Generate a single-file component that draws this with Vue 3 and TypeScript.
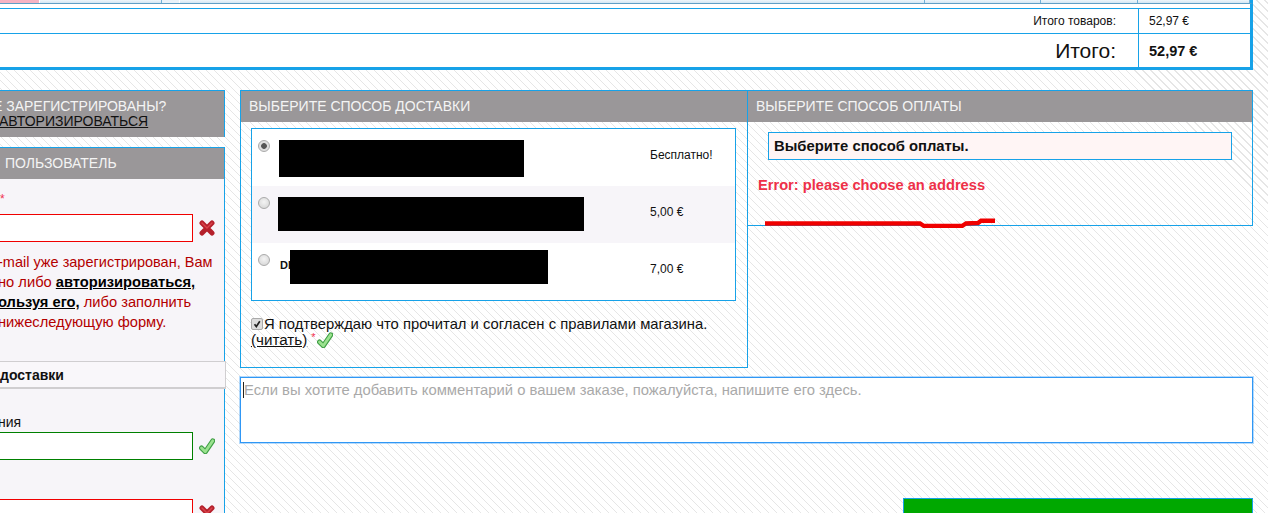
<script setup lang="ts">
const strip = [
  { w: 40, cls: 'pink' },
  { w: 122, cls: '' },
  { w: 18, cls: 'pale' },
  { w: 745, cls: '' },
  { w: 116, cls: '' },
  { w: 97, cls: '' },
  { w: 112, cls: '' },
]

const deliveries = [
  { name: '', price: 'Бесплатно!', checked: true, cls: 'r1' },
  { name: '', price: '5,00 €', checked: false, cls: 'r2' },
  { name: 'DHL', price: '7,00 €', checked: false, cls: 'r3' },
]
</script>

<template>
  <div class="page">
    <div class="strip">
      <span
        v-for="(s, i) in strip"
        :key="i"
        class="strip-cell"
        :class="s.cls"
        :style="{ width: s.w + 'px' }"
      ></span>
    </div>

    <div class="totals">
      <div class="row small">
        <div class="label">Итого товаров:</div>
        <div class="value">52,97 €</div>
      </div>
      <div class="row big">
        <div class="label">Итого:</div>
        <div class="value">52,97 €</div>
      </div>
    </div>

    <div class="main">
      <aside class="left">
        <div class="box login">
          <div class="line-a">Е ЗАРЕГИСТРИРОВАНЫ?</div>
          <a class="line-b">АВТОРИЗИРОВАТЬСЯ</a>
        </div>

        <div class="box user">
          <div class="title">ПОЛЬЗОВАТЕЛЬ</div>
          <div class="body">
            <div class="star">*</div>
            <div class="field">
              <input class="bad" type="text" />
              <svg class="mark" viewBox="0 0 16 16">
                <path d="M3 3 L13 13 M13 3 L3 13" stroke="#b5202b" stroke-width="5" stroke-linecap="round" />
                <path d="M3 3 L8 8 L13 3" fill="none" stroke="#d8434b" stroke-width="1.5" stroke-linecap="round" />
              </svg>
            </div>
            <div class="err">
              <div class="first">-mail уже зарегистрирован, Вам</div>
              <div>но либо <a>авторизироваться,</a></div>
              <div><a>ользуя его,</a> либо заполнить</div>
              <div>нижеследующую форму.</div>
            </div>
            <div class="tab">доставки</div>
            <div class="caption">ния</div>
            <div class="field">
              <input class="good" type="text" />
              <svg class="mark" viewBox="0 0 16 16">
                <path d="M2.5 10 L6.3 13.8 L13.8 2.8" fill="none" stroke="#3f9e45" stroke-width="5" stroke-linecap="round" stroke-linejoin="round" />
                <path d="M2.5 10 L6.3 13.8 L13.8 2.8" fill="none" stroke="#9be28f" stroke-width="2.8" stroke-linecap="round" stroke-linejoin="round" />
              </svg>
            </div>
            <div class="field next">
              <input class="bad" type="text" />
              <svg class="mark" viewBox="0 0 16 16">
                <path d="M3 3 L13 13 M13 3 L3 13" stroke="#b5202b" stroke-width="5" stroke-linecap="round" />
                <path d="M3 3 L8 8 L13 3" fill="none" stroke="#d8434b" stroke-width="1.5" stroke-linecap="round" />
              </svg>
            </div>
          </div>
        </div>
      </aside>

      <section class="right">
        <div class="top">
          <div class="panel delivery">
            <div class="title">ВЫБЕРИТЕ СПОСОБ ДОСТАВКИ</div>
            <div class="options">
              <div
                v-for="(d, i) in deliveries"
                :key="i"
                class="option"
                :class="{ alt: i === 1 }"
              >
                <input class="radio" type="radio" name="delivery" :checked="d.checked" />
                <div class="name">{{ d.name }}</div>
                <div class="price">{{ d.price }}</div>
                <div class="redact" :class="d.cls"></div>
              </div>
            </div>
            <div class="agree">
              <span class="check">
                <svg viewBox="0 0 12 12">
                  <path d="M3 6.2 L5.2 9 L9.4 2.8" fill="none" stroke="#222" stroke-width="2" />
                </svg>
              </span>Я подтверждаю что прочитал и согласен с правилами магазина.
              <div class="agree-2">
                <a>(читать)</a>
                <span class="star-2">*</span>
                <svg class="mark" viewBox="0 0 16 16">
                  <path d="M2.5 10 L6.3 13.8 L13.8 2.8" fill="none" stroke="#3f9e45" stroke-width="5" stroke-linecap="round" stroke-linejoin="round" />
                  <path d="M2.5 10 L6.3 13.8 L13.8 2.8" fill="none" stroke="#9be28f" stroke-width="2.8" stroke-linecap="round" stroke-linejoin="round" />
                </svg>
              </div>
            </div>
          </div>

          <div class="panel payment">
            <div class="title">ВЫБЕРИТЕ СПОСОБ ОПЛАТЫ</div>
            <div class="notice">Выберите способ оплаты.</div>
            <div class="error">Error: please choose an address</div>
            <svg class="scribble" viewBox="0 0 240 12">
              <path d="M1 7.5 L156 7.5 L160 10 L198 10 L202 7.5 L214 7 L217 4.8 L231 4.8" fill="none" stroke="#f00000" stroke-width="4.4" />
            </svg>
          </div>
        </div>

        <div class="comment">
          <textarea placeholder="Если вы хотите добавить комментарий о вашем заказе, пожалуйста, напишите его здесь."></textarea>
          <span class="caret"></span>
        </div>

        <div class="actions">
          <button class="confirm" type="button"></button>
        </div>
      </section>
    </div>
  </div>
</template>

<style>
html,
body {
  margin: 0;
  overflow: hidden;
}
</style>

<style scoped>
.page {
  width: 1268px;
  height: 513px;
  overflow: hidden;
  font-family: "Liberation Sans", Arial, sans-serif;
  font-size: 14px;
  color: #111;
  background: repeating-linear-gradient(45deg, #e6e6e6 0, #e6e6e6 0.8px, #fff 0.8px, #fff 5.66px);
}

.strip {
  display: flex;
  width: 1253px;
  box-sizing: border-box;
  height: 4px;
  border-right: 3px solid #17a2e8;
  border-bottom: 1px solid #5f9fc6;
}
.strip-cell {
  height: 3px;
  background: linear-gradient(#eef6fb, #d3e6f3);
  border-right: 1px solid #6fb0d8;
  box-sizing: border-box;
}
.strip-cell.pink {
  background: #f5b3c3;
  border-right-color: #fff;
}
.strip-cell.pale {
  background: #e8f2f9;
  border-right-color: #fff;
}

.totals {
  width: 1253px;
  box-sizing: border-box;
  background: #fff;
  padding-top: 4px;
  border-right: 3px solid #17a2e8;
  border-bottom: 3px solid #17a2e8;
}
.row {
  display: flex;
  border-top: 1px solid #17a2e8;
}
.row.small {
  height: 24px;
}
.row.big {
  height: 33px;
}
.label {
  flex: 1;
  display: flex;
  align-items: center;
  justify-content: flex-end;
  padding-right: 22px;
  border-right: 1px solid #17a2e8;
}
.value {
  width: 101px;
  padding-left: 10px;
  display: flex;
  align-items: center;
}
.small .label {
  font-size: 12px;
}
.small .value {
  font-size: 12px;
}
.big .label {
  font-size: 21px;
}
.big .value {
  font-size: 14.5px;
  font-weight: bold;
}

.main {
  display: flex;
  gap: 15px;
  margin-top: 20px;
}

.left {
  width: 225px;
  flex: none;
}
.box {
  box-sizing: border-box;
  border-top: 1px solid #17a2e8;
  border-right: 1px solid #17a2e8;
}
.login {
  height: 47px;
  background: #9a9799;
  padding-top: 8px;
  line-height: 15px;
  overflow: hidden;
  white-space: nowrap;
}
.line-a {
  color: #f4f4f4;
  margin-left: -7px;
}
.line-b {
  display: block;
  margin-left: -1px;
  color: #111;
  text-decoration: underline;
}
.user {
  margin-top: 10px;
  height: 400px;
  background: #f7f5f9;
}
.title {
  height: 31px;
  line-height: 31px;
  background: #9a9799;
  color: #f4f4f4;
}
.user .title {
  padding-left: 5px;
}
.body {
  display: flex;
  flex-direction: column;
}
.star {
  height: 35px;
  padding-top: 12px;
  box-sizing: border-box;
  line-height: 16px;
  color: #f03050;
  font-size: 12px;
}
.field {
  display: flex;
  align-items: center;
  gap: 6px;
}
.field input {
  width: 193px;
  height: 28px;
  box-sizing: border-box;
  background: #fff;
  outline: none;
  padding: 0;
}
.bad {
  border: 1px solid #f00000;
  border-left: none;
}
.good {
  border: 1px solid #008000;
  border-left: none;
}
.mark {
  width: 16px;
  height: 16px;
  flex: none;
}
.err {
  margin: 10px 0 0 -2px;
  font-size: 14.7px;
  line-height: 20px;
  color: #b30000;
  white-space: nowrap;
}
.err .first {
  font-size: 14.5px;
}
.err a {
  color: #000;
  font-weight: bold;
  text-decoration: underline;
}
.tab {
  position: relative;
  width: 226px;
  height: 28px;
  margin-top: 29px;
  box-sizing: border-box;
  line-height: 26px;
  font-weight: bold;
  background: #f9f7fa;
  border: 1px solid #d0ced0;
  border-left: none;
  border-bottom-width: 2px;
}
.caption {
  height: 16px;
  line-height: 16px;
  margin: 25px 0 2px -2px;
}
.next {
  margin-top: 39px;
}

.right {
  width: 1013px;
  flex: none;
}
.top {
  display: flex;
  align-items: flex-start;
}
.panel {
  position: relative;
  box-sizing: border-box;
  border: 1px solid #17a2e8;
}
.delivery {
  width: 508px;
  height: 278px;
}
.payment {
  width: 506px;
  height: 136px;
  margin-left: -1px;
}
.panel .title {
  padding-left: 8px;
}
.options {
  margin: 6px 11px 0 10px;
  border: 1px solid #17a2e8;
  background: #fff;
}
.option {
  position: relative;
  display: flex;
  align-items: flex-start;
  height: 57px;
}
.option.alt {
  background: #f7f5f9;
}
.radio {
  appearance: none;
  width: 12px;
  height: 12px;
  margin: 11px 0 0 6px;
  flex: none;
  border: 1px solid #aaa;
  border-radius: 50%;
  box-sizing: border-box;
  background: radial-gradient(circle at 50% 40%, #f4f4f4, #d2d2d2);
}
.radio:checked {
  background: radial-gradient(circle, #555 0, #555 2.5px, #ddd 3.2px, #e4e4e4 100%);
}
.name {
  width: 370px;
  margin: 15px 0 0 10px;
  font-size: 11px;
  font-weight: bold;
  line-height: 14px;
}
.price {
  font-size: 12px;
  line-height: 14px;
  margin-top: 19px;
}
.redact {
  position: absolute;
  background: #000;
}
.r1 {
  left: 27px;
  top: 11px;
  width: 245px;
  height: 37px;
}
.r2 {
  left: 26px;
  top: 11px;
  width: 306px;
  height: 34px;
}
.r3 {
  left: 38px;
  top: 7px;
  width: 258px;
  height: 34px;
}
.agree {
  margin: 15px 10px 0;
  font-size: 14.8px;
  line-height: 16px;
}
.check {
  display: inline-block;
  width: 12px;
  height: 12px;
  margin-right: 1px;
  vertical-align: -1px;
  box-sizing: border-box;
  border: 1px solid #aaa;
  border-radius: 2px;
  background: #ddd;
}
.check svg {
  display: block;
  width: 10px;
  height: 10px;
}
.agree-2 {
  display: flex;
  align-items: flex-start;
  height: 20px;
}
.agree-2 a {
  font-size: 15.2px;
  text-decoration: underline;
}
.star-2 {
  color: #f03050;
  font-size: 11px;
  line-height: 11px;
  margin: 0 0 0 4px;
}
.agree-2 .mark {
  margin: 0 0 0 1px;
}

.notice {
  margin: 10px 20px 0;
  height: 28px;
  box-sizing: border-box;
  line-height: 26px;
  padding-left: 5px;
  font-size: 14.8px;
  font-weight: bold;
  background: #fff5f5;
  border: 1px solid #17a2e8;
}
.error {
  margin: 17px 0 0 10px;
  font-size: 14.65px;
  font-weight: bold;
  color: #ee3048;
  line-height: 16px;
}
.scribble {
  position: absolute;
  left: 16px;
  top: 125px;
  width: 240px;
  height: 12px;
}

.comment {
  position: relative;
  margin-top: 9px;
}
.comment textarea {
  display: block;
  width: 1013px;
  height: 66px;
  box-sizing: border-box;
  margin: 0;
  padding: 4px 3px;
  border: 1px solid #2f97f5;
  box-shadow: 0 0 0 1px rgba(47, 151, 245, 0.35);
  background: #fff;
  outline: none;
  resize: none;
  font-family: "Liberation Sans", Arial, sans-serif;
  font-size: 14.8px;
}
.comment textarea::placeholder {
  color: #a9a9a9;
}
.caret {
  position: absolute;
  left: 3px;
  top: 5px;
  width: 1px;
  height: 16px;
  background: #222;
}

.actions {
  display: flex;
  justify-content: flex-end;
  margin-top: 55px;
}
.confirm {
  width: 350px;
  height: 40px;
  background: #00a800;
  border: 1px solid #17a2e8;
  padding: 0;
}
</style>
